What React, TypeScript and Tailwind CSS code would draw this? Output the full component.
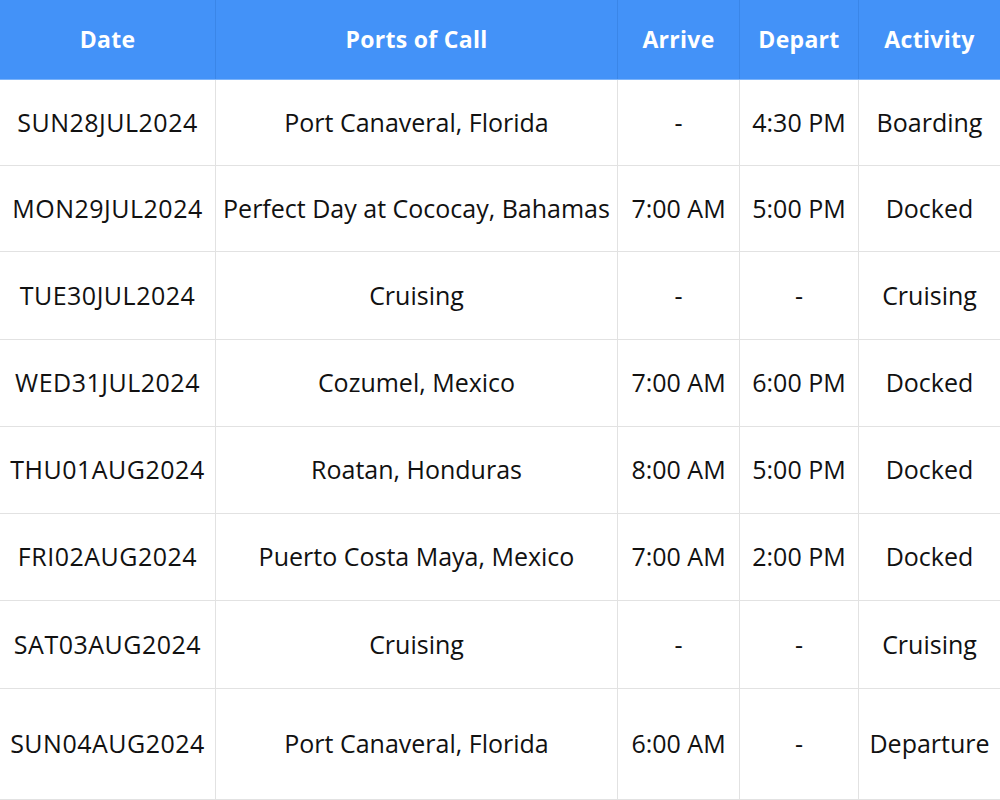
import React from "react";

const rows = [
  ["SUN28JUL2024", "Port Canaveral, Florida", "-", "4:30 PM", "Boarding", "h-[86px]"],
  ["MON29JUL2024", "Perfect Day at Cococay, Bahamas", "7:00 AM", "5:00 PM", "Docked", "h-[86px]"],
  ["TUE30JUL2024", "Cruising", "-", "-", "Cruising", "h-[88px]"],
  ["WED31JUL2024", "Cozumel, Mexico", "7:00 AM", "6:00 PM", "Docked", "h-[87px]"],
  ["THU01AUG2024", "Roatan, Honduras", "8:00 AM", "5:00 PM", "Docked", "h-[87px]"],
  ["FRI02AUG2024", "Puerto Costa Maya, Mexico", "7:00 AM", "2:00 PM", "Docked", "h-[87px]"],
  ["SAT03AUG2024", "Cruising", "-", "-", "Cruising", "h-[88px]"],
  ["SUN04AUG2024", "Port Canaveral, Florida", "6:00 AM", "-", "Departure", "h-[111px]"],
];

const cols = "grid grid-cols-[215px_402px_122px_119px_142px]";

export default function App() {
  return (
    <div className="w-[1000px] h-[800px] bg-white font-['Open_Sans',sans-serif] overflow-hidden">
      <div className={`${cols} h-[80px] bg-[#4392f8] text-white font-bold text-[23px] tracking-[0.3px] border-b border-[#7bb3fa]`}>
        {["Date", "Ports of Call", "Arrive", "Depart", "Activity"].map((h, i) => (
          <div key={h} className={`flex items-center justify-center ${i > 0 ? "border-l border-[#3a86e8]" : ""}`}>
            {h}
          </div>
        ))}
      </div>
      {rows.map((r) => (
        <div key={r[0]} className={`${cols} ${r[5]} border-b border-[#e2e2e2] text-[#111111] text-[25px]`}>
          {r.slice(0, 5).map((c, i) => (
            <div
              key={i}
              className={`flex items-center justify-center whitespace-nowrap ${i > 0 ? "border-l border-[#e2e2e2]" : "tracking-[0.5px]"}`}
            >
              {c}
            </div>
          ))}
        </div>
      ))}
    </div>
  );
}
